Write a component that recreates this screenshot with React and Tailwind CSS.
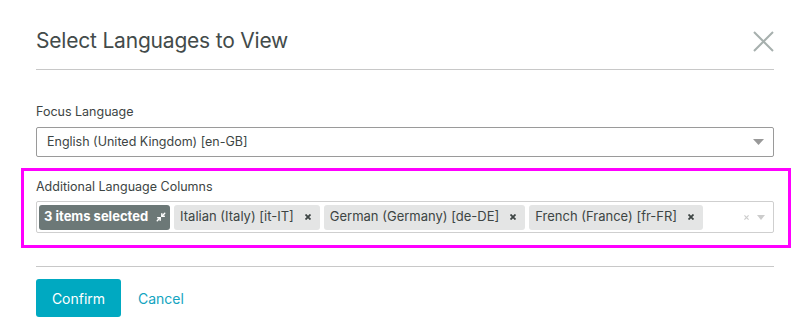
import React from "react";

const X = ({ size = 6, color = "#3d4544", w = 1.8 }) => (
  <svg width={size} height={size} viewBox="0 0 6 6">
    <path d="M0.5 0.5 L5.5 5.5 M5.5 0.5 L0.5 5.5" stroke={color} strokeWidth={w} />
  </svg>
);

const Chip = ({ children }) => (
  <div className="flex items-center h-[25px] rounded-[3px] bg-[#e4e5e5] pl-[6px] pr-[9px] text-[13px] text-[#3d4544] whitespace-nowrap">
    <span>{children}</span>
    <span className="ml-[11px]"><X /></span>
  </div>
);

export default function App() {
  return (
    <div className="w-[811px] h-[335px] bg-white pl-[36px] pr-[37px] overflow-hidden" style={{ fontFamily: "Inter, 'Noto Sans', sans-serif" }}>
      <div className="flex items-center justify-between pt-[26px] pb-[13px] border-b border-[#c8c8c8]">
        <h1 className="text-[21px] leading-[30px] text-[#434b4a] font-normal tracking-[-0.2px]">Select Languages to View</h1>
        <svg width="21" height="21" viewBox="0 0 21 21">
          <path d="M1 1 L20 20 M20 1 L1 20" stroke="#a7b0ae" strokeWidth="2" />
        </svg>
      </div>

      <div className="pt-[34px]">
        <div className="text-[12.5px] leading-[16px] text-[#3d4544]">Focus Language</div>
        <div className="mt-[7px] h-[30px] border border-[#9a9a9a] rounded-[2px] flex items-center justify-between pl-[10px] pr-[9px]">
          <span className="text-[12.5px] text-[#3d4544]">English (United Kingdom) [en-GB]</span>
          <svg width="11" height="6" viewBox="0 0 11 6"><path d="M0 0 H11 L5.5 6 Z" fill="#999" /></svg>
        </div>

        <div className="mt-[11px] ml-[-15px] mr-[-17px] border-[3px] border-[#ff00ff] pl-[12px] pr-[14px] pt-[8px] pb-[12px]">
          <div className="text-[12.5px] leading-[16px] text-[#3d4544]">Additional Language Columns</div>
          <div className="mt-[6px] h-[32px] border border-[#cfcfcf] rounded-[2px] flex items-center pl-[2px] pr-[8px]">
            <div className="flex items-center gap-[4px] flex-1">
              <div className="flex items-center h-[25px] rounded-[3px] bg-[#6c7877] pl-[5px] pr-[4px] text-[13px] font-bold text-white whitespace-nowrap">
                <span>3 items selected</span>
                <svg className="ml-[8px]" width="10" height="10" viewBox="0 0 24 24" fill="none" stroke="white" strokeWidth="3.5" strokeLinecap="round" strokeLinejoin="round">
                  <polyline points="4 14 10 14 10 20" />
                  <polyline points="20 10 14 10 14 4" />
                  <line x1="14" y1="10" x2="21" y2="3" />
                  <line x1="3" y1="21" x2="10" y2="14" />
                </svg>
              </div>
              <Chip>Italian (Italy) [it-IT]</Chip>
              <Chip>German (Germany) [de-DE]</Chip>
              <Chip>French (France) [fr-FR]</Chip>
            </div>
            <span className="mr-[8px]"><X size={5} color="#cccccc" w={1.4} /></span>
            <svg width="8" height="5" viewBox="0 0 8 5"><path d="M0 0 H8 L4 5 Z" fill="#cccccc" /></svg>
          </div>
        </div>

        <div className="mt-[18px] border-t border-[#c8c8c8] pt-[12px] flex items-center">
          <button className="h-[38px] w-[85px] rounded-[3px] bg-[#00a9c1] text-white text-[14px]">Confirm</button>
          <span className="ml-[17px] text-[14px] text-[#13a4bf]">Cancel</span>
        </div>
      </div>
    </div>
  );
}
